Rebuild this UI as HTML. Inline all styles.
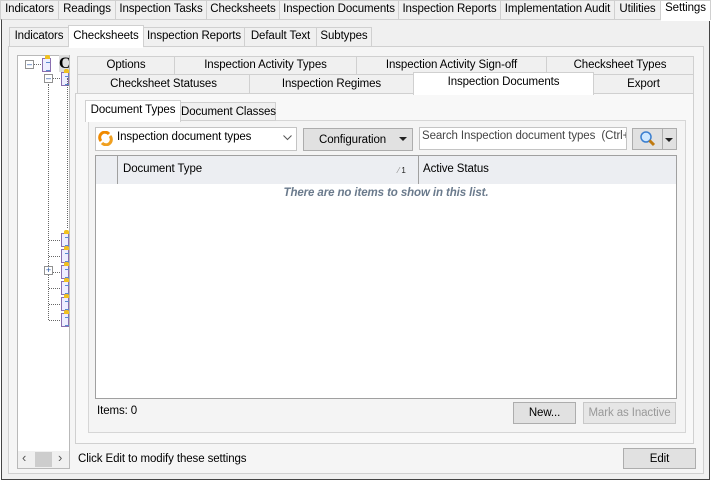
<!DOCTYPE html>
<html><head><meta charset="utf-8"><style>
*{box-sizing:border-box;margin:0;padding:0}
body{width:711px;height:481px;background:#fff;font-family:"Liberation Sans",Tahoma,sans-serif;font-size:11.5px;letter-spacing:-0.1px;color:#000;position:relative;overflow:hidden}
.a{position:absolute}
.t{position:absolute;border:1px solid #d0d0d0;background:#f0f0f0;text-align:center;white-space:nowrap;line-height:17px}
.btn{position:absolute;border:1px solid #adadad;background:#e1e1e1;text-align:center;line-height:19px}
.ico{position:absolute;width:9px;height:14px;background:#eef;border:1px solid #8a6fb0}
.ico:before{content:"";position:absolute;left:2px;top:-4px;width:5px;height:4px;background:#f0c020;border-radius:2px 2px 0 0}
.ico:after{content:"";position:absolute;left:3px;top:3px;width:4px;height:7px;border-top:1px solid #5a8ad0;border-bottom:1px solid #5a8ad0}
.pm{position:absolute;width:9px;height:9px;border:1px solid #919191;background:#fff;font-size:9px;line-height:7px;text-align:center;color:#2050a0}
</style></head><body>
<div class="a" style="left:0;top:0;width:711px;height:20px;background:#fff"></div>
<div class="t" style="left:0;top:0;width:59px;height:20px">Indicators</div>
<div class="t" style="left:58px;top:0;width:58px;height:20px">Readings</div>
<div class="t" style="left:115px;top:0;width:92px;height:20px">Inspection Tasks</div>
<div class="t" style="left:206px;top:0;width:74px;height:20px">Checksheets</div>
<div class="t" style="left:279px;top:0;width:120px;height:20px">Inspection Documents</div>
<div class="t" style="left:398px;top:0;width:103px;height:20px">Inspection Reports</div>
<div class="t" style="left:500px;top:0;width:115px;height:20px">Implementation Audit</div>
<div class="t" style="left:614px;top:0;width:47px;height:20px">Utilities</div>
<div class="t" style="left:660px;top:0;width:51px;height:20px;background:#fff;border-bottom:none;line-height:15px">Settings</div>
<div class="a" style="left:1px;top:19px;width:709px;height:461px;border:1px solid #444;border-top:1px solid #d0d0d0;background:#f0f0f0"></div>
<div class="a" style="left:661px;top:19px;width:49px;height:2px;background:#fff"></div>
<div class="t" style="left:9px;top:27px;width:60px;height:20px">Indicators</div>
<div class="t" style="left:68px;top:25px;width:76px;height:22px;background:#fff;border-bottom:none;line-height:20px">Checksheets</div>
<div class="t" style="left:143px;top:27px;width:102px;height:20px">Inspection Reports</div>
<div class="t" style="left:244px;top:27px;width:73px;height:20px">Default Text</div>
<div class="t" style="left:316px;top:27px;width:56px;height:20px">Subtypes</div>
<div class="a" style="left:8px;top:46px;width:696px;height:428px;border:1px solid #d0d0d0;background:#f5f5f5"></div>
<div class="a" style="left:69px;top:46px;width:74px;height:2px;background:#fff"></div>
<div class="a" style="left:17px;top:55px;width:53px;height:414px;border:1px solid #b9b9b9;background:#fff"></div>
<div class="a" style="left:18px;top:451px;width:51px;height:17px;background:#f0f0f0"></div>
<div class="a" style="left:35px;top:452px;width:17px;height:15px;background:#cdcdcd"></div>
<div class="a" style="left:22px;top:450px;font-size:13px;color:#555">&#8249;</div>
<div class="a" style="left:58px;top:450px;font-size:13px;color:#555">&#8250;</div>
<div class="pm" style="left:25px;top:60px">&#8211;</div>
<div class="a" style="left:34px;top:64px;width:7px;border-top:1px dotted #666"></div>
<div class="ico" style="left:42px;top:58px"></div>
<div class="a" style="left:59px;top:55px;width:10px;height:17px;background:#ddd;font:bold 16px 'Liberation Serif',serif;line-height:17px;overflow:hidden">C</div>
<div class="pm" style="left:44px;top:74px">&#8211;</div>
<div class="a" style="left:53px;top:78px;width:7px;border-top:1px dotted #666"></div>
<div class="ico" style="left:61px;top:72px;width:8px"></div>
<div class="a" style="left:48px;top:84px;height:236px;border-left:1px dotted #666"></div>
<div class="a" style="left:67px;top:78px;height:150px;border-left:1px dotted #666"></div>
<div class="ico" style="left:61px;top:233px;width:8px"></div>
<div class="ico" style="left:61px;top:249px;width:8px"></div>
<div class="ico" style="left:61px;top:265px;width:8px"></div>
<div class="ico" style="left:61px;top:281px;width:8px"></div>
<div class="ico" style="left:61px;top:297px;width:8px"></div>
<div class="ico" style="left:61px;top:313px;width:8px"></div>
<div class="pm" style="left:44px;top:266px">+</div>
<div class="a" style="left:49px;top:240px;width:11px;border-top:1px dotted #666"></div>
<div class="a" style="left:49px;top:256px;width:11px;border-top:1px dotted #666"></div>
<div class="a" style="left:53px;top:272px;width:7px;border-top:1px dotted #666"></div>
<div class="a" style="left:49px;top:288px;width:11px;border-top:1px dotted #666"></div>
<div class="a" style="left:49px;top:304px;width:11px;border-top:1px dotted #666"></div>
<div class="a" style="left:49px;top:320px;width:11px;border-top:1px dotted #666"></div>
<div class="t" style="left:77px;top:56px;width:98px;height:19px">Options</div>
<div class="t" style="left:174px;top:56px;width:183px;height:19px">Inspection Activity Types</div>
<div class="t" style="left:356px;top:56px;width:191px;height:19px">Inspection Activity Sign-off</div>
<div class="t" style="left:546px;top:56px;width:148px;height:19px">Checksheet Types</div>
<div class="t" style="left:77px;top:74px;width:173px;height:20px;line-height:19px">Checksheet Statuses</div>
<div class="t" style="left:249px;top:74px;width:165px;height:20px;line-height:19px">Inspection Regimes</div>
<div class="t" style="left:593px;top:74px;width:101px;height:20px;line-height:19px">Export</div>
<div class="a" style="left:75px;top:93px;width:619px;height:351px;border:1px solid #d0d0d0;background:#f8f8f8"></div>
<div class="t" style="left:413px;top:72px;width:181px;height:23px;background:#fff;border-bottom:none;line-height:18px">Inspection Documents</div>
<div class="a" style="left:88px;top:120px;width:598px;height:313px;border:1px solid #d6d6d6;background:#f4f4f4"></div>
<div class="t" style="left:85px;top:100px;width:96px;height:22px;background:#fff;border-bottom:none;line-height:19px">Document Types</div>
<div class="t" style="left:180px;top:102px;width:96px;height:19px;line-height:19px">Document Classes</div>
<div class="a" style="left:95px;top:127px;width:202px;height:24px;border:1px solid #c4c4c4;background:#fff"></div>
<svg class="a" style="left:98px;top:131px" width="15" height="15" viewBox="0 0 15 15"><path d="M3 10 A5 5 0 0 1 11 3" stroke="#f08a00" stroke-width="3" fill="none"/><path d="M12 5 A5 5 0 0 1 4 12" stroke="#f0a020" stroke-width="3" fill="none"/></svg>
<div class="a" style="left:117px;top:131px">Inspection document types</div>
<svg class="a" style="left:283px;top:135px" width="9" height="6"><path d="M0.5 0.5 L4.5 4.5 L8.5 0.5" stroke="#555" fill="none"/></svg>
<div class="btn" style="left:303px;top:128px;width:110px;height:23px;line-height:22px;text-align:left;padding-left:15px">Configuration</div>
<div class="a" style="left:399px;top:137px;border:4px solid transparent;border-top:4px solid #222"></div>
<div class="a" style="left:419px;top:127px;width:208px;height:23px;border:1px solid #c4c4c4;background:#fff;padding:2px 0 0 2px;color:#444;white-space:nowrap;overflow:hidden">Search Inspection document types&nbsp; (Ctrl+F</div>
<div class="btn" style="left:632px;top:128px;width:31px;height:22px"></div>
<svg class="a" style="left:639px;top:130px" width="18" height="18"><circle cx="7" cy="7" r="5" fill="#cfe8ff" stroke="#3b7fd0" stroke-width="1.5"/><path d="M10.5 10.5 L15 15" stroke="#c07a10" stroke-width="3"/></svg>
<div class="btn" style="left:662px;top:128px;width:15px;height:22px"></div>
<div class="a" style="left:665px;top:138px;border:4px solid transparent;border-top:4px solid #222"></div>
<div class="a" style="left:95px;top:155px;width:582px;height:244px;border:1px solid #a0a0a0;background:#fff"></div>
<div class="a" style="left:96px;top:156px;width:580px;height:28px;background:#eceef2"></div>
<div class="a" style="left:117px;top:156px;height:28px;border-left:1px solid #a0a0a0"></div>
<div class="a" style="left:418px;top:156px;height:28px;border-left:1px solid #a0a0a0"></div>
<div class="a" style="left:123px;top:163px">Document Type</div>
<div class="a" style="left:398px;top:166px;font-size:8px;color:#888">&#8260; <span style="color:#222">1</span></div>
<div class="a" style="left:423px;top:163px">Active Status</div>
<div class="a" style="left:96px;top:187px;width:580px;text-align:center;font-weight:bold;font-style:italic;color:#6a7a8c">There are no items to show in this list.</div>
<div class="a" style="left:97px;top:405px">Items: 0</div>
<div class="btn" style="left:513px;top:402px;width:63px;height:22px;line-height:20px">New...</div>
<div class="btn" style="left:583px;top:402px;width:93px;height:22px;line-height:20px;color:#999;background:#e6e6e6;border-color:#c8c8c8">Mark as Inactive</div>
<div class="a" style="left:78px;top:453px">Click Edit to modify these settings</div>
<div class="btn" style="left:623px;top:448px;width:73px;height:21px;line-height:20px">Edit</div>
</body></html>
